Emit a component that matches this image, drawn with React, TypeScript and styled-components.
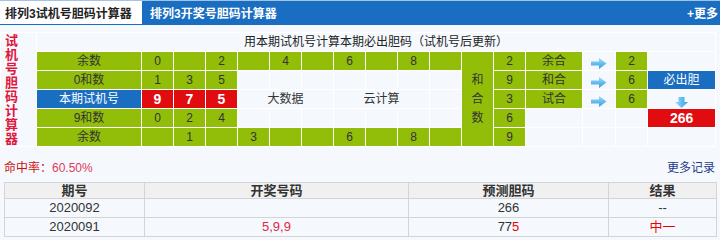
import React from 'react';
import styled, { createGlobalStyle } from 'styled-components';

const GlobalStyle = createGlobalStyle`
  html, body {
    margin: 0;
    padding: 0;
    background: #f5f9fe;
    font-family: "Liberation Sans", "Noto Sans CJK SC", sans-serif;
    font-size: 12px;
    color: #333;
  }
`;

type Tone = 'green' | 'blue' | 'red' | 'plain';

const toneBg: Record<Tone, string> = {
  green: '#92be0a',
  blue: '#1a6ec2',
  red: '#e10c10',
  plain: '#f5f9fe',
};

const Page = styled.div`
  width: 720px;
`;

const Header = styled.div`
  display: flex;
  align-items: stretch;
  height: 23px;
  border-top: 1px solid #a3c3e6;
  border-bottom: 1px solid #1a6ec2;
  background: #1a6ec2;
`;

const Tab = styled.div<{ $active?: boolean }>`
  display: flex;
  align-items: center;
  padding: 0 8px 0 ${(p) => (p.$active ? '5px' : '8px')};
  width: ${(p) => (p.$active ? '129px' : 'auto')};
  background: ${(p) => (p.$active ? '#fff' : 'transparent')};
  color: ${(p) => (p.$active ? '#222' : '#fff')};
  font-weight: bold;
  font-size: 12px;
  white-space: nowrap;
`;

const More = styled.a`
  margin-left: auto;
  display: flex;
  align-items: center;
  padding-right: 2px;
  color: #fff;
  font-weight: bold;
  font-size: 12px;
  text-decoration: none;
`;

const CalcTable = styled.table`
  margin-top: 7px;
  border-collapse: separate;
  border-spacing: 1px;
  background: #fff;
  table-layout: fixed;
  width: 716px;
`;

const Cell = styled.td<{ $tone?: Tone; $bold?: boolean }>`
  height: 18px;
  padding: 0;
  text-align: center;
  vertical-align: middle;
  background: ${(p) => toneBg[p.$tone ?? 'plain']};
  color: ${(p) => (p.$tone === 'blue' || p.$tone === 'red' ? '#fff' : '#333')};
  font-size: ${(p) => (p.$bold ? '14px' : '12px')};
  font-weight: ${(p) => (p.$bold ? 'bold' : 'normal')};
  line-height: 18px;
  white-space: nowrap;
`;

const TitleCell = styled(Cell)`
  color: #222;
`;

const SideCell = styled.td`
  padding: 0 0 0 4px;
  background: #f5f9fe;
  vertical-align: middle;
`;

const VerticalLabel = styled.div`
  width: 13px;
  color: #e0163c;
  font-size: 13px;
  font-weight: bold;
  line-height: 14px;
  white-space: normal;
  word-break: break-all;
`;

const SumCell = styled(Cell)`
  white-space: normal;
  line-height: 19px;
`;

const NarrowText = styled.div`
  width: 12px;
  margin: 0 auto;
  word-break: break-all;
`;

const ArrowCell = styled(Cell)`
  vertical-align: top;
  svg {
    display: block;
    margin: 6px auto 0;
  }
`;

const DownCell = styled(Cell)`
  vertical-align: top;
  svg {
    display: block;
    margin: 7px auto 0;
  }
`;

const HitRow = styled.div`
  display: flex;
  justify-content: space-between;
  align-items: center;
  height: 31px;
  padding: 4px 5px 0 4px;
`;

const HitLabel = styled.span`
  color: #cc1111;
  font-size: 12px;
`;

const HitValue = styled.span`
  color: #e03a5a;
  font-size: 12px;
`;

const MoreRecords = styled.a`
  color: #1f3c8a;
  font-size: 12px;
  text-decoration: none;
`;

const RecordTable = styled.table`
  margin: 0 4px;
  width: 712px;
  border-collapse: collapse;
  table-layout: fixed;
`;

const Th = styled.th`
  height: 15px;
  padding: 0;
  border: 1px solid #d4d4d4;
  background: #f0f0f0;
  color: #333;
  font-size: 13px;
  font-weight: bold;
  line-height: 15px;
`;

const Td = styled.td<{ $red?: boolean }>`
  height: 18px;
  padding: 0;
  border: 1px solid #d4d4d4;
  text-align: center;
  color: ${(p) => (p.$red ? '#e02848' : '#333')};
  font-size: 13px;
  line-height: 18px;
`;

const Red = styled.span`
  color: #e00;
`;

const RightArrow = () => (
  <svg width="16" height="11" viewBox="0 0 16 11">
    <defs>
      <linearGradient id="ra" x1="0" y1="0" x2="0" y2="1">
        <stop offset="0" stopColor="#9fdcfb" />
        <stop offset="1" stopColor="#2f9fe2" />
      </linearGradient>
    </defs>
    <path d="M0 3.5 H8 V0 L15.5 5.5 L8 11 V7.5 H0 Z" fill="url(#ra)" />
  </svg>
);

const DownArrow = () => (
  <svg width="13" height="11" viewBox="0 0 13 11">
    <defs>
      <linearGradient id="da" x1="0" y1="0" x2="1" y2="0">
        <stop offset="0" stopColor="#9fdcfb" />
        <stop offset="1" stopColor="#2f9fe2" />
      </linearGradient>
    </defs>
    <path d="M3.5 0 H9.5 V5 H13 L6.5 11 L0 5 H3.5 Z" fill="url(#da)" />
  </svg>
);

const topRow = ['0', '', '2', '', '4', '', '6', '', '8', ''];
const bottomRow = ['', '1', '', '3', '', '', '6', '', '8', ''];
const colWidths = [35, 104, 31, 31, 31, 31, 31, 31, 31, 31, 31, 31, 31, 31, 56, 32, 31, 67];

const records = [
  { issue: '2020092', draw: '', predict: <>266</>, result: <>--</> },
  { issue: '2020091', draw: '5,9,9', predict: <>77<Red>5</Red></>, result: <Red>中一</Red> },
];

const Empty = ({ n }: { n: number }) => (
  <>
    {Array.from({ length: n }, (_, i) => (
      <Cell key={i} />
    ))}
  </>
);

export default function App() {
  return (
    <Page>
      <GlobalStyle />
      <Header>
        <Tab $active>排列3试机号胆码计算器</Tab>
        <Tab>排列3开奖号胆码计算器</Tab>
        <More href="#">+更多</More>
      </Header>

      <CalcTable>
        <colgroup>
          {colWidths.map((w, i) => (
            <col key={i} style={{ width: w }} />
          ))}
        </colgroup>
        <tbody>
          <tr>
            <SideCell rowSpan={6}>
              <VerticalLabel>试机号胆码计算器</VerticalLabel>
            </SideCell>
            <TitleCell colSpan={17}>用本期试机号计算本期必出胆码（试机号后更新）</TitleCell>
          </tr>
          <tr>
            <Cell $tone="green">余数</Cell>
            {topRow.map((v, i) => (
              <Cell key={i} $tone="green">{v}</Cell>
            ))}
            <SumCell $tone="green" rowSpan={5}>
              <NarrowText>和合数</NarrowText>
            </SumCell>
            <Cell $tone="green">2</Cell>
            <Cell $tone="green">余合</Cell>
            <ArrowCell><RightArrow /></ArrowCell>
            <Cell $tone="green">2</Cell>
            <Cell />
          </tr>
          <tr>
            <Cell $tone="green">0和数</Cell>
            {['1', '3', '5'].map((v) => (
              <Cell key={v} $tone="green">{v}</Cell>
            ))}
            <Empty n={7} />
            <Cell $tone="green">9</Cell>
            <Cell $tone="green">和合</Cell>
            <ArrowCell><RightArrow /></ArrowCell>
            <Cell $tone="green">6</Cell>
            <Cell $tone="blue">必出胆</Cell>
          </tr>
          <tr>
            <Cell $tone="blue">本期试机号</Cell>
            {['9', '7', '5'].map((v) => (
              <Cell key={v} $tone="red" $bold>{v}</Cell>
            ))}
            <Cell colSpan={3}>大数据</Cell>
            <Cell colSpan={3}>云计算</Cell>
            <Cell />
            <Cell $tone="green">3</Cell>
            <Cell $tone="green">试合</Cell>
            <ArrowCell><RightArrow /></ArrowCell>
            <Cell $tone="green">6</Cell>
            <DownCell><DownArrow /></DownCell>
          </tr>
          <tr>
            <Cell $tone="green">9和数</Cell>
            {['0', '2', '4'].map((v) => (
              <Cell key={v} $tone="green">{v}</Cell>
            ))}
            <Empty n={7} />
            <Cell $tone="green">6</Cell>
            <Empty n={3} />
            <Cell $tone="red" $bold>266</Cell>
          </tr>
          <tr>
            <Cell $tone="green">余数</Cell>
            {bottomRow.map((v, i) => (
              <Cell key={i} $tone="green">{v}</Cell>
            ))}
            <Cell $tone="green">9</Cell>
            <Empty n={4} />
          </tr>
        </tbody>
      </CalcTable>

      <HitRow>
        <span>
          <HitLabel>命中率：</HitLabel>
          <HitValue>60.50%</HitValue>
        </span>
        <MoreRecords href="#">更多记录</MoreRecords>
      </HitRow>

      <RecordTable>
        <colgroup>
          <col style={{ width: 140 }} />
          <col style={{ width: 264 }} />
          <col style={{ width: 200 }} />
          <col style={{ width: 108 }} />
        </colgroup>
        <thead>
          <tr>
            <Th>期号</Th>
            <Th>开奖号码</Th>
            <Th>预测胆码</Th>
            <Th>结果</Th>
          </tr>
        </thead>
        <tbody>
          {records.map((r) => (
            <tr key={r.issue}>
              <Td>{r.issue}</Td>
              <Td $red>{r.draw}</Td>
              <Td>{r.predict}</Td>
              <Td>{r.result}</Td>
            </tr>
          ))}
        </tbody>
      </RecordTable>
    </Page>
  );
}
